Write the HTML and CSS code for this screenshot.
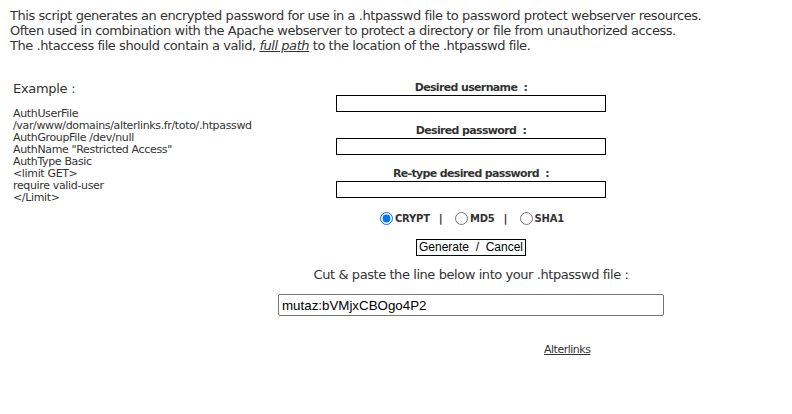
FILE: index.html
```html
<!DOCTYPE html>
<html>
<head>
<meta charset="utf-8">
<title>htpasswd generator</title>
<link rel="stylesheet" href="styles.css">
</head>
<body>
<p class="intro">This script generates an encrypted password for use in a .htpasswd file to password protect webserver resources.<br>
Often used in combination with the Apache webserver to protect a directory or file from unauthorized access.<br>
The .htaccess file should contain a valid, <a class="fullpath" href="#">full path</a> to the location of the .htpasswd file.</p>

<div class="main">
  <div class="left">
    <div class="example-title">Example :</div>
    <div class="code">AuthUserFile<br>/var/www/domains/alterlinks.fr/toto/.htpasswd<br>AuthGroupFile /dev/null<br>AuthName "Restricted Access"<br>AuthType Basic<br>&lt;limit GET&gt;<br>require valid-user<br>&lt;/Limit&gt;</div>
  </div>
  <div class="right">
    <form class="form">
      <label class="field-label">Desired username&nbsp; :</label>
      <input class="field" type="text">
      <label class="field-label">Desired password&nbsp; :</label>
      <input class="field" type="password">
      <label class="field-label">Re-type desired password&nbsp; :</label>
      <input class="field" type="password">
      <div class="algos">
        <input class="radio" type="radio" name="algo" checked><span class="algo">CRYPT</span><span class="sep">|</span>
        <input class="radio" type="radio" name="algo"><span class="algo">MD5</span><span class="sep">|</span>
        <input class="radio" type="radio" name="algo"><span class="algo">SHA1</span>
      </div>
      <button class="btn" type="button">Generate &nbsp;/&nbsp; Cancel</button>
      <div class="cut">Cut &amp; paste the line below into your .htpasswd file :</div>
      <input class="result" type="text" value="mutaz:bVMjxCBOgo4P2">
    </form>
    <div class="footer"><a class="alterlinks" href="#">Alterlinks</a></div>
  </div>
</div>
</body>
</html>
```

FILE: styles.css
```css
html, body {
  background: #ffffff;
}
body {
  margin: 8px;
  font-family: "DejaVu Sans", Verdana, sans-serif;
  color: #333333;
}
.intro {
  margin: 0;
  padding-left: 2px;
  font-size: 13px;
  line-height: 15px;
  letter-spacing: -0.45px;
}
.fullpath {
  color: #333333;
  font-style: italic;
  text-decoration: underline;
}
.main {
  display: flex;
  margin-top: 28px;
}
.left {
  width: 258px;
  padding-left: 5px;
}
.example-title {
  font-size: 13px;
  line-height: 15px;
  letter-spacing: -0.3px;
  margin-bottom: 12px;
}
.code {
  font-size: 11px;
  line-height: 12px;
  letter-spacing: -0.35px;
  white-space: nowrap;
}
.right {
  width: 400px;
  display: flex;
  flex-direction: column;
}
.form {
  display: flex;
  flex-direction: column;
  align-items: center;
  margin: 0;
}
.field-label {
  font-size: 11px;
  line-height: 14px;
  font-weight: bold;
  letter-spacing: -0.65px;
}
.field {
  box-sizing: border-box;
  width: 270px;
  height: 17px;
  margin: 0 0 12px 0;
  padding: 0 2px;
  border: 1px solid #000000;
  border-radius: 0;
  background: #ffffff;
  font-size: 11px;
}
.algos {
  display: flex;
  align-items: center;
  height: 16px;
  padding-left: 2px;
}
.radio {
  width: 13px;
  height: 13px;
  margin: 0 2px 0 0;
  accent-color: #0075ff;
}
.algo {
  font-size: 10px;
  font-weight: bold;
  letter-spacing: -0.2px;
}
.sep {
  font-size: 11px;
  font-weight: bold;
  margin: 0 12px 0 9px;
}
.btn {
  box-sizing: border-box;
  height: 17px;
  width: 110px;
  margin-top: 13px;
  padding: 0;
  border: 1px solid #000000;
  background: #ffffff;
  color: #000000;
  font-family: "Liberation Sans", Arial, sans-serif;
  font-size: 12px;
  line-height: 15px;
}
.cut {
  margin-top: 11px;
  font-size: 13px;
  line-height: 15px;
  letter-spacing: -0.43px;
}
.result {
  box-sizing: border-box;
  width: 386px;
  height: 22px;
  margin-top: 12px;
  padding: 0 3px;
  border: 1px solid #767676;
  border-radius: 2px;
  background: #ffffff;
  color: #000000;
  font-family: "Liberation Sans", Arial, sans-serif;
  font-size: 13.33px;
}
.footer {
  margin-top: 27px;
  padding-left: 273px;
  font-size: 11px;
  line-height: 13px;
  letter-spacing: -0.5px;
}
.alterlinks {
  color: #333333;
  text-decoration: underline;
}
```
